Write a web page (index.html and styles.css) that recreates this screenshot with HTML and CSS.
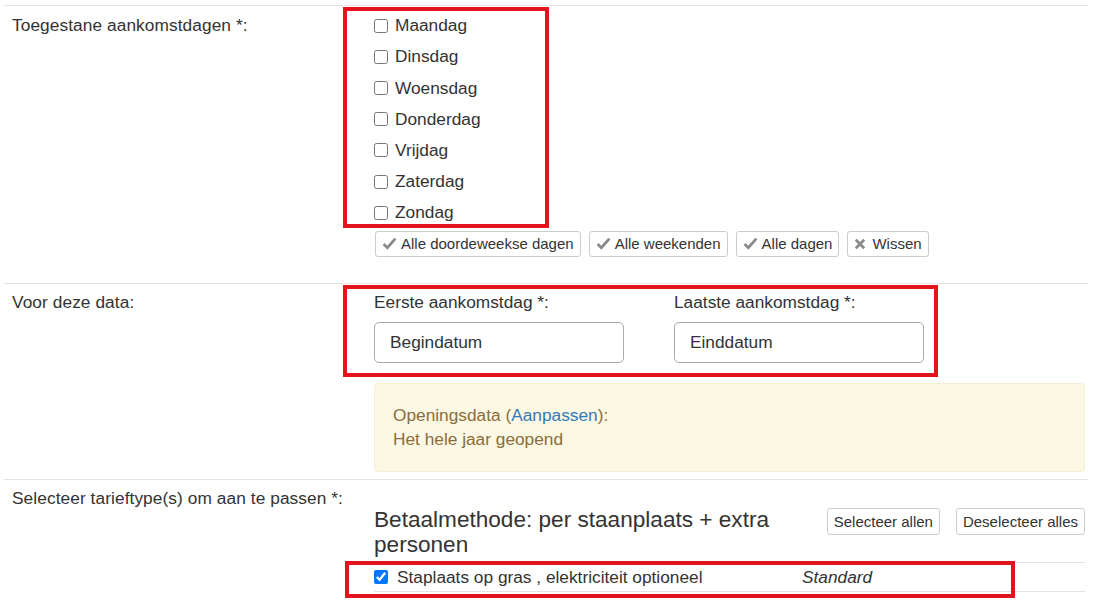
FILE: index.html
```html
<!DOCTYPE html>
<html lang="nl">
<head>
  <meta charset="UTF-8" />
  <meta name="viewport" content="width=device-width, initial-scale=1.0"/>
  <title>Aankomstdagen</title>
  <link rel="stylesheet" href="styles.css">
</head>
<body>
  <div class="form">
    <div class="row">
      <div class="row-label">Toegestane aankomstdagen *:</div>
      <div class="row-field">
        <div class="days marked">
          <label class="day"><input type="checkbox">Maandag</label>
          <label class="day"><input type="checkbox">Dinsdag</label>
          <label class="day"><input type="checkbox">Woensdag</label>
          <label class="day"><input type="checkbox">Donderdag</label>
          <label class="day"><input type="checkbox">Vrijdag</label>
          <label class="day"><input type="checkbox">Zaterdag</label>
          <label class="day"><input type="checkbox">Zondag</label>
        </div>
        <div class="day-buttons">
          <button class="btn"><svg class="icon" viewBox="0 0 14 12"><path d="M1.5 6.5 L5 10 L12.5 1.5" /></svg>Alle doordeweekse dagen</button>
          <button class="btn"><svg class="icon" viewBox="0 0 14 12"><path d="M1.5 6.5 L5 10 L12.5 1.5" /></svg>Alle weekenden</button>
          <button class="btn"><svg class="icon" viewBox="0 0 14 12"><path d="M1.5 6.5 L5 10 L12.5 1.5" /></svg>Alle dagen</button>
          <button class="btn"><svg class="icon icon-x" viewBox="0 0 12 12"><path d="M1.8 1.8 L10.2 10.2 M10.2 1.8 L1.8 10.2" /></svg>Wissen</button>
        </div>
      </div>
    </div>

    <div class="row">
      <div class="row-label">Voor deze data:</div>
      <div class="row-field">
        <div class="dates marked">
          <div class="date-field">
            <label>Eerste aankomstdag *:</label>
            <input type="text" value="Begindatum">
          </div>
          <div class="date-field">
            <label>Laatste aankomstdag *:</label>
            <input type="text" value="Einddatum">
          </div>
        </div>
        <div class="notice">
          Openingsdata (<a href="#">Aanpassen</a>):<br>
          Het hele jaar geopend
        </div>
      </div>
    </div>

    <div class="row">
      <div class="row-label">Selecteer tarieftype(s) om aan te passen *:</div>
      <div class="row-field">
        <div class="rate-header">
          <h4>Betaalmethode: per staanplaats + extra personen</h4>
          <div class="rate-buttons">
            <button class="btn btn-lg">Selecteer allen</button>
            <button class="btn btn-lg">Deselecteer alles</button>
          </div>
        </div>
        <div class="rates marked">
          <table>
            <tr>
              <td class="rate-name"><label><input type="checkbox" checked>Staplaats op gras , elektriciteit optioneel</label></td>
              <td class="rate-kind">Standard</td>
            </tr>
          </table>
        </div>
      </div>
    </div>
  </div>
</body>
</html>
```

FILE: styles.css
```css
:root {
  --text: #333333;
  --line: #e3e3e3;
  --mark: #e3141c;
  --btn-border: #cccccc;
  --icon: #8a8a8a;
}

body {
  margin: 0;
  padding-top: 5px;
  background: #ffffff;
  font-family: 'Liberation Sans', Arial, sans-serif;
  font-size: 17.3px;
  line-height: 24.7px;
  color: var(--text);
}

.row {
  display: flex;
  margin: 0 8px 0 4px;
  padding-top: 4px;
  border-top: 1px solid var(--line);
}

.row:nth-child(1) { padding-bottom: 26px; }
.row:nth-child(2) { padding-bottom: 7px; }
.row:nth-child(3) { padding-bottom: 20px; }

.row-label {
  flex: 0 0 370px;
  box-sizing: border-box;
  padding: 2.5px 0 0 8px;
  letter-spacing: 0.08px;
}

.row-field {
  flex: 1;
  padding-right: 3px;
  min-width: 0;
}

/* red annotation frames */
.marked {
  position: relative;
}

.marked::after {
  content: '';
  position: absolute;
  border: 4px solid var(--mark);
  pointer-events: none;
}

.days::after { top: -3px; left: -31px; right: 0; bottom: 0; }
.dates::after { top: -3px; left: -31px; right: -14px; bottom: -14px; }
.rates::after { top: -1px; left: -29px; right: 70px; bottom: -5.5px; }

.days {
  width: 175px;
}

.day {
  display: flex;
  align-items: center;
  height: 31.2px;
}

input[type="checkbox"] {
  width: 14px;
  height: 14px;
  margin: 0 7px 0 0;
}

.day-buttons {
  display: flex;
  gap: 8px;
  margin-top: 2.6px;
  padding-left: 1px;
}

.btn {
  display: inline-flex;
  align-items: center;
  padding: 2px 6px;
  border: 1px solid var(--btn-border);
  border-radius: 3px;
  background: #ffffff;
  font-family: 'Liberation Sans', Arial, sans-serif;
  font-size: 15px;
  line-height: 20px;
  color: var(--text);
}

.btn-lg {
  line-height: 21px;
}

.icon {
  width: 15px;
  height: 13px;
  margin-right: 4px;
  fill: none;
  stroke: var(--icon);
  stroke-width: 2.6;
}

.icon-x {
  width: 12px;
  height: 12px;
  margin-right: 6px;
  stroke-width: 2.8;
}

.dates {
  display: flex;
  gap: 50px;
  width: 550px;
}

.date-field {
  width: 250px;
}

.date-field label {
  display: block;
  margin: 2px 0 7.5px;
}

.date-field input {
  display: block;
  width: 100%;
  height: 41px;
  box-sizing: border-box;
  padding: 0 15px;
  border: 1px solid #a9a9a9;
  border-radius: 5px;
  font-family: inherit;
  font-size: 17.3px;
  color: var(--text);
}

.notice {
  margin-top: 20px;
  padding: 18.6px 18px;
  background: #fcf8e3;
  border: 1px solid #f7efd2;
  border-radius: 4px;
  color: #8a6d3b;
}

.notice a {
  color: #337ab7;
  text-decoration: none;
}

.rate-header {
  display: flex;
  align-items: flex-start;
  margin-top: 24.5px;
}

.rate-header h4 {
  flex: 0 0 415px;
  margin: 0;
  font-size: 22.6px;
  font-weight: normal;
  line-height: 1.1;
}

.rate-buttons {
  display: flex;
  gap: 16px;
  margin-left: auto;
}

.rates {
  margin-top: 3.8px;
}

table {
  width: 100%;
  border-collapse: collapse;
}

td {
  padding: 2px 0;
  border-top: 1px solid var(--line);
  border-bottom: 1px solid var(--line);
}

.rate-name {
  width: 428px;
}

.rate-name label {
  display: flex;
  align-items: center;
}

.rate-name input[type="checkbox"] {
  margin-right: 9px;
}

.rate-kind {
  font-style: italic;
}
```
